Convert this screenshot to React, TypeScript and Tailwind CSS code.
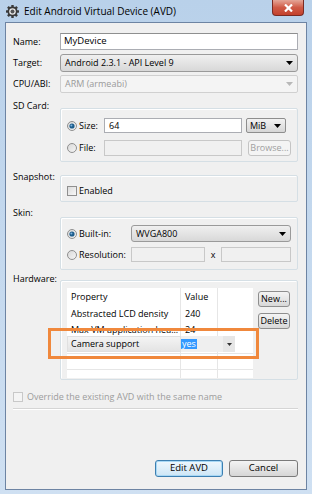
import React from "react";

const Arrow = ({ color = "#000" }: { color?: string }) => (
  <svg width="7" height="4" viewBox="0 0 7 4" className="shrink-0">
    <path d="M0 0 H7 L3.5 4 Z" fill={color} />
  </svg>
);

const Radio = ({ checked }: { checked?: boolean }) => (
  <svg width="10" height="10" viewBox="0 0 10 10" className="shrink-0">
    <defs>
      <linearGradient id={checked ? "rg1" : "rg0"} x1="0" y1="0" x2="1" y2="1">
        <stop offset="0" stopColor="#d8d8d8" />
        <stop offset="1" stopColor="#f6f6f6" />
      </linearGradient>
    </defs>
    <circle cx="5" cy="5" r="4.5" fill={`url(#${checked ? "rg1" : "rg0"})`} stroke="#8f8f8f" strokeWidth="1" />
    {checked && <circle cx="5" cy="5" r="2.6" fill="#1d5d8c" />}
    {checked && <circle cx="4.4" cy="4.4" r="1" fill="#7fb3dd" />}
  </svg>
);

const Check = ({ disabled }: { disabled?: boolean }) => (
  <div
    className={`w-[10px] h-[10px] shrink-0 border ${
      disabled ? "border-[#c8c8c8] bg-[#f4f4f4]" : "border-[#8f8f8f] bg-gradient-to-br from-[#dcdcdc] to-[#f8f8f8]"
    }`}
  />
);

const Gear = () => (
  <svg width="13" height="13" viewBox="0 0 13 13" className="shrink-0">
    <g fill="#3a3a3a">
      <circle cx="6.5" cy="6.5" r="5" />
      <rect x="5.3" y="0" width="2.4" height="13" />
      <rect x="0" y="5.3" width="13" height="2.4" />
      <rect x="5.3" y="0" width="2.4" height="13" transform="rotate(45 6.5 6.5)" />
      <rect x="5.3" y="0" width="2.4" height="13" transform="rotate(-45 6.5 6.5)" />
    </g>
    <circle cx="6.5" cy="6.5" r="3.3" fill="#e8e8e8" />
    <circle cx="6.5" cy="6.5" r="2" fill="#555" />
  </svg>
);

export default function App() {
  return (
    <div className="relative w-[312px] h-[494px] overflow-hidden flex flex-col bg-gradient-to-b from-[#b9d1ea] to-[#cfe0f2] font-['Open_Sans',sans-serif] text-[9px] text-black">
      {/* title bar */}
      <div className="h-[22px] shrink-0 flex items-start">
        <div className="flex items-center pl-[6px] pt-[5px] gap-[5px]">
          <Gear />
          <span className="text-[10px] leading-[13px] text-black">Edit Android Virtual Device (AVD)</span>
        </div>
        <div className="ml-auto mr-[8px] w-[32px] h-[16px] rounded-b-[4px] border border-t-0 border-[#7a2a22] bg-gradient-to-b from-[#e4a597] via-[#cf5a46] to-[#c3412c] flex items-center justify-center">
          <svg width="9" height="8" viewBox="0 0 9 8">
            <path d="M1 0.5 L8 7.5 M8 0.5 L1 7.5" stroke="#fff" strokeWidth="2.2" />
          </svg>
        </div>
      </div>

      {/* client */}
      <div className="mx-[5px] mb-[4px] flex-1 border border-[#6d84a3] bg-[#f0f0f0] pl-[7px] pr-[8px] pt-[10px] flex flex-col">
        {/* Name */}
        <div className="flex items-center h-[17px]">
          <div className="w-[47px] leading-[12px]">Name:</div>
          <div className="flex-1 h-full bg-white border border-[#abadb3] border-t-[#8e8f8f] flex items-center pl-[3px] text-[9.5px]">
            MyDevice
          </div>
        </div>
        {/* Target */}
        <div className="flex items-center h-[18px] mt-[4px]">
          <div className="w-[47px] leading-[12px]">Target:</div>
          <div className="flex-1 h-full rounded-[3px] border border-[#9a9a9a] bg-gradient-to-b from-[#f0f0f0] to-[#d8d8d8] flex items-center pl-[4px] pr-[4px]">
            <span className="flex-1">Android 2.3.1 - API Level 9</span>
            <Arrow />
          </div>
        </div>
        {/* CPU/ABI */}
        <div className="flex items-center h-[18px] mt-[3px]">
          <div className="w-[47px] leading-[12px]">CPU/ABI:</div>
          <div className="flex-1 h-full rounded-[2px] border border-[#d0d0d0] bg-[#f4f4f4] flex items-center pl-[4px] pr-[4px] text-[#9a9a9a]">
            <span className="flex-1">ARM (armeabi)</span>
            <Arrow color="#b8b8b8" />
          </div>
        </div>

        {/* SD Card */}
        <div className="flex items-start mt-[7px]">
          <div className="w-[47px] leading-[12px]">SD Card:</div>
          <div className="flex-1 mt-[8px] border border-[#d5dfe5] rounded-[2px] shadow-[inset_1px_1px_0_#ffffff] pl-[6px] pt-[9px] pb-[5px] flex flex-col gap-[7px]">
            <div className="flex items-center h-[15px]">
              <div className="w-[37px] flex items-center gap-[2px]">
                <Radio checked />
                <span>Size:</span>
              </div>
              <div className="w-[138px] h-full bg-white border border-[#abadb3] flex items-center pl-[4px]">64</div>
              <div className="ml-[4px] w-[40px] h-full rounded-[2px] border border-[#8e8e8e] bg-gradient-to-b from-[#f2f2f2] to-[#d6d6d6] flex items-center pl-[3px] pr-[4px]">
                <span className="flex-1">MiB</span>
                <Arrow />
              </div>
            </div>
            <div className="flex items-center h-[16px]">
              <div className="w-[37px] flex items-center gap-[2px]">
                <Radio />
                <span>File:</span>
              </div>
              <div className="w-[138px] h-full bg-[#f0f0f0] border border-[#c8c8c8]" />
              <div className="ml-[6px] w-[43px] h-full rounded-[3px] border border-[#c4c4c4] bg-[#f4f4f4] flex items-center justify-center text-[#a0a0a0]">
                Browse...
              </div>
            </div>
          </div>
        </div>

        {/* Snapshot */}
        <div className="flex items-start mt-[9px]">
          <div className="w-[47px] leading-[12px]">Snapshot:</div>
          <div className="flex-1 mt-[4px] border border-[#d5dfe5] rounded-[2px] shadow-[inset_1px_1px_0_#ffffff] pl-[6px] pt-[10px] pb-[5px]">
            <div className="flex items-center h-[10px] gap-[2px]">
              <Check />
              <span>Enabled</span>
            </div>
          </div>
        </div>

        {/* Skin */}
        <div className="flex items-start mt-[5px]">
          <div className="w-[47px] leading-[12px]">Skin:</div>
          <div className="flex-1 mt-[10px] border border-[#d5dfe5] rounded-[2px] shadow-[inset_1px_1px_0_#ffffff] pl-[6px] pt-[7px] pb-[7px] flex flex-col gap-[5px]">
            <div className="flex items-center h-[17px]">
              <div className="w-[64px] flex items-center gap-[2px]">
                <Radio checked />
                <span>Built-in:</span>
              </div>
              <div className="w-[160px] h-full rounded-[3px] border border-[#9a9a9a] bg-gradient-to-b from-[#f0f0f0] to-[#d8d8d8] flex items-center pl-[4px] pr-[4px]">
                <span className="flex-1">WVGA800</span>
                <Arrow />
              </div>
            </div>
            <div className="flex items-center h-[15px]">
              <div className="w-[64px] flex items-center gap-[2px]">
                <Radio />
                <span>Resolution:</span>
              </div>
              <div className="w-[74px] h-full bg-[#f0f0f0] border border-[#c8c8c8]" />
              <div className="w-[16px] text-center">x</div>
              <div className="w-[70px] h-full bg-[#f0f0f0] border border-[#c8c8c8]" />
            </div>
          </div>
        </div>

        {/* Hardware */}
        <div className="flex items-start mt-[3px]">
          <div className="w-[47px] leading-[12px]">Hardware:</div>
          <div className="flex-1 mt-[7px] border border-[#d5dfe5] rounded-[2px] shadow-[inset_1px_1px_0_#ffffff] pl-[6px] pt-[7px] pb-[1px] flex gap-[5px]">
            <div className="relative w-[186px] h-[90px] bg-white grid grid-cols-[114px_37px_35px] grid-rows-[18px_16px_16px_16px_16px_8px]">
              {/* header */}
              <div className="border-r border-[#e6e6e6] pl-[4px] flex items-center">Property</div>
              <div className="border-r border-[#e6e6e6] pl-[4px] flex items-center">Value</div>
              <div />
              <div className="border-r border-[#e6e6e6] pl-[4px] flex items-center">Abstracted LCD density</div>
              <div className="border-r border-[#e6e6e6] pl-[4px] flex items-center">240</div>
              <div />
              <div className="border-r border-[#e6e6e6] pl-[4px] flex items-center">Max VM application hea...</div>
              <div className="border-r border-[#e6e6e6] pl-[4px] flex items-center">24</div>
              <div />
              <div className="border-r border-b border-[#e6e6e6]" />
              <div className="border-r border-b border-[#e6e6e6]" />
              <div className="border-b border-[#e6e6e6]" />
              <div className="border-r border-b border-[#e6e6e6]" />
              <div className="border-r border-b border-[#e6e6e6]" />
              <div className="border-b border-[#e6e6e6]" />
              <div className="border-r border-[#e6e6e6]" />
              <div className="border-r border-[#e6e6e6]" />
              <div />
              {/* cell editor */}
              <div className="absolute left-0 top-[48px] h-[16px] w-[168px] flex">
                <div className="w-[114px] h-full bg-gradient-to-b from-[#f4f4f4] to-[#e4e4e4] border border-[#e0e0e0] pl-[3px] flex items-center">
                  Camera support
                </div>
                <div className="w-[42px] h-full bg-[#efefef] flex items-center">
                  <span className="bg-[#3399ff] text-white px-[1px] leading-[10px]">yes</span>
                </div>
                <div className="w-[12px] h-full bg-[#e6e6e6] flex items-center justify-center">
                  <svg width="5" height="3" viewBox="0 0 5 3"><path d="M0 0H5L2.5 3Z" fill="#333" /></svg>
                </div>
              </div>
            </div>
            <div className="flex flex-col">
              <div className="mt-[3px] w-[32px] h-[16px] rounded-[3px] border border-[#8e8e8e] bg-gradient-to-b from-[#f4f4f4] to-[#d8d8d8] flex items-center justify-center">
                New...
              </div>
              <div className="mt-[6px] w-[32px] h-[16px] rounded-[3px] border border-[#8e8e8e] bg-gradient-to-b from-[#f4f4f4] to-[#d8d8d8] flex items-center justify-center">
                Delete
              </div>
            </div>
          </div>
        </div>

        {/* Override */}
        <div className="flex items-center gap-[4px] mt-[12px] h-[10px] text-[#9c9c9c]">
          <Check disabled />
          <span>Override the existing AVD with the same name</span>
        </div>

        {/* separator */}
        <div className="mt-[6px] h-[2px] border-t border-[#d5d5d5] border-b border-b-white" />

        {/* buttons */}
        <div className="mt-[50px] flex justify-end gap-[6px]">
          <div className="w-[68px] h-[17px] rounded-[3px] border border-[#3c7fb1] bg-gradient-to-b from-[#eef7fd] to-[#cde6f6] shadow-[inset_0_0_0_1px_#a8d8f5] flex items-center justify-center text-[9.5px]">
            Edit AVD
          </div>
          <div className="w-[69px] h-[17px] rounded-[3px] border border-[#7a7a7a] bg-gradient-to-b from-[#f4f4f4] to-[#d6d6d6] flex items-center justify-center text-[9.5px]">
            Cancel
          </div>
        </div>
      </div>

      {/* orange highlight */}
      <div className="absolute left-[48px] top-[328px] w-[211px] h-[31px] border-[3px] border-[#f0883c]" />
    </div>
  );
}
